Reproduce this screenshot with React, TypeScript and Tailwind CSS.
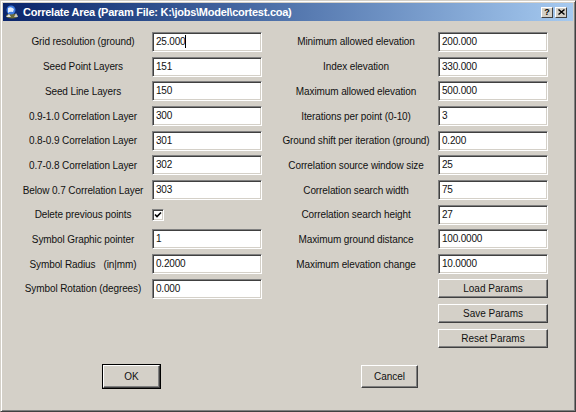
import React from "react";

const leftRows: [string, string | null][] = [
  ["Grid resolution (ground)", "25.000"],
  ["Seed Point Layers", "151"],
  ["Seed Line Layers", "150"],
  ["0.9-1.0 Correlation Layer", "300"],
  ["0.8-0.9 Correlation Layer", "301"],
  ["0.7-0.8 Correlation Layer", "302"],
  ["Below 0.7 Correlation Layer", "303"],
  ["Delete previous points", null],
  ["Symbol Graphic pointer", "1"],
  ["Symbol Radius   (in|mm)", "0.2000"],
  ["Symbol Rotation (degrees)", "0.000"],
];

const rightRows: [string, string][] = [
  ["Minimum allowed elevation", "200.000"],
  ["Index elevation", "330.000"],
  ["Maximum allowed elevation", "500.000"],
  ["Iterations per point (0-10)", "3"],
  ["Ground shift per iteration (ground)", "0.200"],
  ["Correlation source window size", "25"],
  ["Correlation search width", "75"],
  ["Correlation search height", "27"],
  ["Maximum ground distance", "100.0000"],
  ["Maximum elevation change", "10.0000"],
];

function Edit({ value, caret = false }: { value: string; caret?: boolean }) {
  return (
    <div className="w-[110px] h-[20px] bg-white border border-t-[#808080] border-l-[#808080] border-b-white border-r-white shadow-[inset_1px_1px_#404040,inset_-1px_-1px_#d4d0c8] flex items-center px-[3px] text-[10px] tracking-[-0.2px] leading-none text-[#111]">
      <span>{value}</span>
      {caret && <span className="w-px h-[13px] bg-black" />}
    </div>
  );
}

function Button({ label, w, h, isDefault = false }: { label: string; w: string; h: string; isDefault?: boolean }) {
  const inner = (
    <div
      className={`${isDefault ? "w-full h-full" : `${w} ${h}`} bg-[#d4d0c8] border border-t-white border-l-white border-b-[#404040] border-r-[#404040] shadow-[inset_-1px_-1px_#808080] flex items-center justify-center text-[10px] text-[#111]`}
    >
      {label}
    </div>
  );
  if (!isDefault) return inner;
  return <div className={`${w} ${h} border border-black`}>{inner}</div>;
}

function Row({ label, children, labelW }: { label: string; children: React.ReactNode; labelW: string }) {
  return (
    <div className="h-[24.7px] flex items-center gap-[6px]">
      <div className={`${labelW} text-center text-[10px] tracking-[-0.1px] whitespace-pre text-[#111]`}>{label}</div>
      {children}
    </div>
  );
}

function TitleIcon() {
  return (
    <svg width="14" height="14" viewBox="0 0 14 14">
      <ellipse cx="7" cy="11" rx="6" ry="2.5" fill="#6a6a3a" />
      <circle cx="6" cy="5" r="4.5" fill="#3c7ae0" />
      <path d="M3 3 Q6 1 9 4 L8 7 Q5 6 3 8 Z" fill="#ffffff" opacity="0.85" />
      <path d="M1 12 L4 9 L6 12 Z" fill="#e0e0e0" />
      <path d="M9 12 L11 8 L13 12 Z" fill="#c8c8c8" />
    </svg>
  );
}

export default function App() {
  return (
    <div
      className="w-[576px] h-[412px] bg-[#d4d0c8] border border-t-[#d4d0c8] border-l-[#d4d0c8] border-b-[#404040] border-r-[#404040] shadow-[inset_1px_1px_white,inset_-1px_-1px_#808080] p-[2px] flex flex-col overflow-hidden"
      style={{ fontFamily: '"Liberation Sans", Arial, sans-serif' }}
    >
      {/* Title bar */}
      <div className="h-[18px] bg-gradient-to-r from-[#0a246a] to-[#a6caf0] flex items-center pl-[2px] pr-[6px]">
        <TitleIcon />
        <span className="ml-[4px] text-white font-bold text-[11px] tracking-[-0.25px] flex-1">
          Correlate Area (Param File: K:\jobs\Model\cortest.coa)
        </span>
        <div className="flex items-center gap-[2px]">
          <div className="w-[12px] h-[11px] bg-[#d4d0c8] border border-t-white border-l-white border-b-[#404040] border-r-[#404040] flex items-center justify-center text-[9px] font-bold leading-none text-black">
            ?
          </div>
          <div className="w-[12px] h-[11px] bg-[#d4d0c8] border border-t-white border-l-white border-b-[#404040] border-r-[#404040] flex items-center justify-center">
            <svg width="7" height="6" viewBox="0 0 7 6">
              <path d="M0.5 0.5 L6.5 5.5 M6.5 0.5 L0.5 5.5" stroke="black" strokeWidth="1.4" />
            </svg>
          </div>
        </div>
      </div>

      {/* Body */}
      <div className="flex pt-[8.6px] pl-[17px]">
        <div className="flex flex-col">
          {leftRows.map(([label, value], i) => (
            <Row key={label} label={label} labelW="w-[126px]">
              {value !== null ? (
                <Edit value={value} caret={i === 0} />
              ) : (
                <div className="w-[110px] h-[20px] flex items-center pt-[1px]">
                  <div className="w-[12px] h-[12px] bg-white border border-t-[#808080] border-l-[#808080] border-b-white border-r-white shadow-[inset_1px_1px_#404040,inset_-1px_-1px_#d4d0c8] flex items-center justify-center">
                    <svg width="8" height="8" viewBox="0 0 8 8">
                      <path d="M1 3.5 L3 5.5 L7 1.5" stroke="black" strokeWidth="1.6" fill="none" />
                    </svg>
                  </div>
                </div>
              )}
            </Row>
          ))}
        </div>
        <div className="flex flex-col ml-[18px]">
          {rightRows.map(([label, value]) => (
            <Row key={label} label={label} labelW="w-[152px]">
              <Edit value={value} />
            </Row>
          ))}
          {["Load Params", "Save Params", "Reset Params"].map((b) => (
            <Row key={b} label="" labelW="w-[152px]">
              <Button label={b} w="w-[110px]" h="h-[19px]" />
            </Row>
          ))}
        </div>
      </div>

      {/* Footer */}
      <div className="flex items-center mt-[13px]">
        <div className="ml-[99px]">
          <Button label="OK" w="w-[59px]" h="h-[25px]" isDefault />
        </div>
        <div className="ml-[200px]">
          <Button label="Cancel" w="w-[57px]" h="h-[23px]" />
        </div>
      </div>
    </div>
  );
}
